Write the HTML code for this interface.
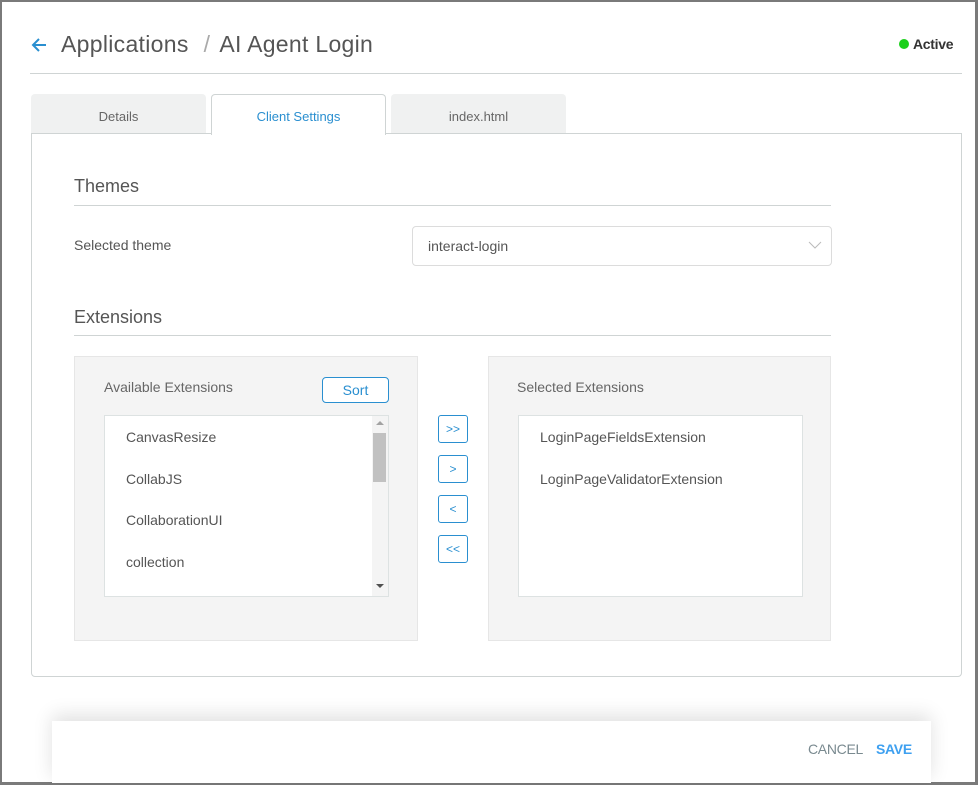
<!DOCTYPE html>
<html><head><meta charset="utf-8"><style>
*{box-sizing:border-box;margin:0;padding:0}
html,body{width:978px;height:785px;overflow:hidden;background:#fff;font-family:"Liberation Sans",sans-serif}
.frame{position:absolute;left:0;top:0;width:978px;height:785px;border:2px solid #7a7a7a;border-right-width:3px;border-bottom-width:3px}
.abs{position:absolute}
.title{left:61px;top:31px;font-size:23px;letter-spacing:0.3px;color:#555;white-space:nowrap}
.title .sl{color:#aaa;margin:0 9px 0 15px}
.tab{position:absolute;top:94px;height:40px;background:#f0f1f1;border-radius:4px 4px 0 0;font-size:13px;color:#666;text-align:center;line-height:46px}
.panel{left:31px;top:133px;width:931px;height:544px;border:1px solid #cfd4d4;border-radius:0 0 4px 4px}
.h{font-size:18px;color:#555}
.line{height:1px;background:#cfd4d4}
.box{background:#f4f4f4;border:1px solid #e6e6e6}
.list{background:#fff;border:1px solid #dde2e2}
.item{font-size:14px;color:#555;position:absolute;left:21px}
.btn{position:absolute;left:438px;width:30px;height:28px;border:1px solid #2a8fd0;border-radius:3px;color:#2a8fd0;font-size:12px;text-align:center;line-height:26px}
</style></head><body>
<div class="frame"></div>
<svg class="abs" style="left:30px;top:37px" width="18" height="16" viewBox="0 0 18 16"><path d="M16 8H3M9 2L3 8l6 6" fill="none" stroke="#2a8fd0" stroke-width="2"/></svg>
<div class="abs title">Applications<span class="sl">/</span>AI Agent Login</div>
<div class="abs" style="left:899px;top:39px;width:10px;height:10px;border-radius:50%;background:#1ad01a"></div>
<div class="abs" style="left:913px;top:36px;font-size:14px;color:#333;font-weight:bold;letter-spacing:-0.3px">Active</div>
<div class="abs line" style="left:30px;top:73px;width:932px"></div>
<div class="tab" style="left:31px;width:175px">Details</div>
<div class="tab" style="left:211px;width:175px;background:#fff;border:1px solid #cfd4d4;border-bottom:none;color:#2a8fd0;height:41px;z-index:2;line-height:44px">Client Settings</div>
<div class="tab" style="left:391px;width:175px">index.html</div>
<div class="abs panel"></div>
<div class="abs h" style="left:74px;top:176px">Themes</div>
<div class="abs line" style="left:74px;top:205px;width:757px"></div>
<div class="abs" style="left:74px;top:237px;font-size:14px;color:#555">Selected theme</div>
<div class="abs" style="left:412px;top:226px;width:420px;height:40px;border:1px solid #dcdcdc;border-radius:4px"></div>
<div class="abs" style="left:428px;top:238px;font-size:14px;color:#555">interact-login</div>
<svg class="abs" style="left:808px;top:240px" width="14" height="10"><path d="M1 2l6 6 6-6" fill="none" stroke="#bbb" stroke-width="1"/></svg>
<div class="abs h" style="left:74px;top:307px">Extensions</div>
<div class="abs line" style="left:74px;top:335px;width:757px"></div>
<div class="abs box" style="left:74px;top:356px;width:344px;height:285px"></div>
<div class="abs" style="left:104px;top:379px;font-size:14px;color:#666">Available Extensions</div>
<div class="abs" style="left:322px;top:377px;width:67px;height:26px;border:1px solid #2a8fd0;border-radius:4px;background:#fff;color:#2a8fd0;font-size:14px;text-align:center;line-height:24px">Sort</div>
<div class="abs list" style="left:104px;top:415px;width:285px;height:182px">
<div class="item" style="top:13px">CanvasResize</div>
<div class="item" style="top:55px">CollabJS</div>
<div class="item" style="top:96px">CollaborationUI</div>
<div class="item" style="top:138px">collection</div>
<div class="abs" style="right:0;top:0;width:16px;height:180px;background:#f4f4f4"></div>
<div class="abs" style="right:2px;top:17px;width:13px;height:49px;background:#c1c1c1"></div>
<div class="abs" style="right:4px;top:5px;width:0;height:0;border:4px solid transparent;border-bottom-color:#a3a3a3;border-top:none"></div>
<div class="abs" style="right:4px;top:168px;width:0;height:0;border:4px solid transparent;border-top-color:#505050;border-bottom:none"></div>
</div>
<div class="btn" style="top:415px">&gt;&gt;</div>
<div class="btn" style="top:455px">&gt;</div>
<div class="btn" style="top:495px">&lt;</div>
<div class="btn" style="top:535px">&lt;&lt;</div>
<div class="abs box" style="left:488px;top:356px;width:343px;height:285px"></div>
<div class="abs" style="left:517px;top:379px;font-size:14px;color:#666">Selected Extensions</div>
<div class="abs list" style="left:518px;top:415px;width:285px;height:182px">
<div class="item" style="top:13px">LoginPageFieldsExtension</div>
<div class="item" style="top:55px">LoginPageValidatorExtension</div>
</div>
<div class="abs" style="left:52px;top:721px;width:879px;height:62px;background:#fff;box-shadow:0 -6px 18px rgba(0,0,0,0.12)"></div>
<div class="abs" style="left:808px;top:741px;font-size:14px;color:#7a8a90;letter-spacing:-0.3px">CANCEL</div>
<div class="abs" style="left:876px;top:741px;font-size:14px;color:#3ea0f0;font-weight:bold;letter-spacing:-0.3px">SAVE</div>
</body></html>
